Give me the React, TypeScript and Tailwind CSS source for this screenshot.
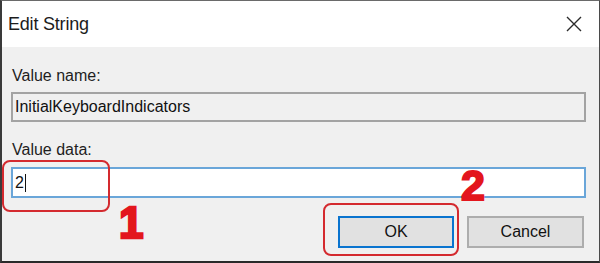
import React from 'react';

const font = { fontFamily: '"Liberation Sans", Arial, sans-serif' };

function CloseIcon() {
  return (
    <svg width="16" height="16" viewBox="0 0 16 16" className="block">
      <path d="M1 1 L15 15 M15 1 L1 15" stroke="#2b2b2b" strokeWidth="1.4" fill="none" />
    </svg>
  );
}

export default function App() {
  return (
    <div className="w-[600px] h-[263px] overflow-hidden bg-white" style={font}>
      <div className="relative w-[600px] h-[263px] flex flex-col border-l-2 border-b-2 border-t border-r border-l-[#3a3a3a] border-b-[#2a2a2a] border-t-[#6a6a6a] border-r-[#4a4a4a]">
        {/* title bar */}
        <div className="h-[46px] shrink-0 bg-white flex items-center justify-between pl-[6px] pr-[17px]">
          <span className="text-[18px] text-[#1c1c1c] tracking-[-0.2px]">Edit String</span>
          <CloseIcon />
        </div>

        {/* body */}
        <div className="flex-1 bg-[#f0f0f0] flex flex-col pl-[9px] pr-[13px] pt-[19px]">
          <div className="h-[20px] leading-[20px] text-[16px] text-[#1e1e1e] pl-[1px]">Value name:</div>
          <div className="mt-[6px] h-[30px] border-2 border-[#a3a3a3] bg-[#f0f0f0] flex items-center pl-[2px] text-[16px] text-[#111]">
            InitialKeyboardIndicators
          </div>

          <div className="mt-[18px] h-[20px] leading-[20px] text-[16px] text-[#1e1e1e] pl-[1px]">Value data:</div>
          <div className="mt-[7px] h-[31px] border-2 border-[#6aa6d9] bg-white flex items-center pl-[2px] text-[16px] text-[#111]">
            <span>2</span>
            <span className="ml-[1px] w-[1px] h-[18px] bg-[#111]" />
          </div>

          <div className="mt-[18px] flex justify-end gap-[13px] pr-[2px]">
            <div className="w-[116px] h-[32px] border-2 border-[#0a74cf] bg-[#e1e1e1] flex items-center justify-center text-[16px] text-[#111]">
              OK
            </div>
            <div className="w-[117px] h-[32px] border-2 border-[#adadad] bg-[#e1e1e1] flex items-center justify-center text-[16px] text-[#111]">
              Cancel
            </div>
          </div>
        </div>

        {/* annotations */}
        <div className="absolute left-0 top-[159px] w-[108px] h-[52px] rounded-[8px] border-2 border-[#d42a2f]" />
        <div className="absolute left-[321px] top-[202px] w-[136px] h-[53px] rounded-[8px] border-2 border-[#d42a2f]" />
        <span className="absolute left-[117px] top-[200px] text-[44px] leading-none font-bold text-[#e3161d] [-webkit-text-stroke:2.5px_#e3161d]">
          1
        </span>
        <span className="absolute left-[459px] top-[163px] text-[43px] leading-none font-bold text-[#e3161d] [-webkit-text-stroke:2px_#e3161d]">
          2
        </span>
      </div>
    </div>
  );
}
